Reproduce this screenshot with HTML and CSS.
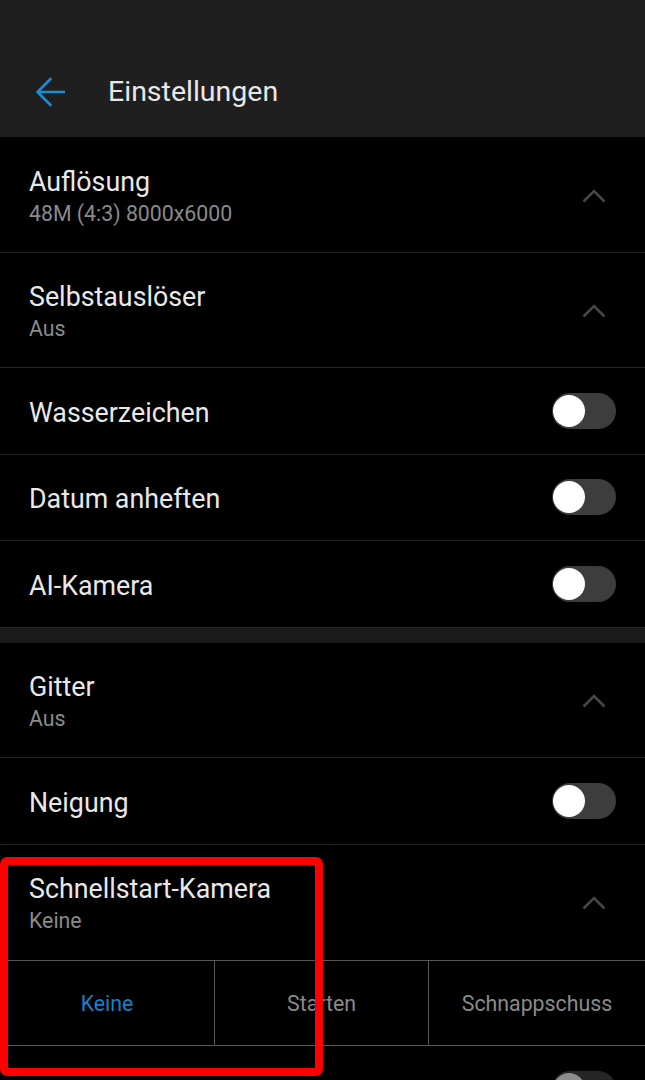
FILE: index.html
```html
<!DOCTYPE html>
<html lang="de">
<head>
<meta charset="utf-8">
<title>Einstellungen</title>
<link rel="stylesheet" href="styles.css">
</head>
<body>
<div class="screen">
  <header class="appbar">
    <svg class="back" width="30" height="30" viewBox="0 0 30 30" aria-hidden="true">
      <path d="M29 15 H2.5 M15.5 2 L2.5 15 L15.5 28" fill="none" stroke="#1e8ad3" stroke-width="2.6" stroke-linecap="round" stroke-linejoin="round"/>
    </svg>
    <h1 class="appbar-title">Einstellungen</h1>
  </header>

  <div class="group">
    <div class="row row-tall row-first">
      <div class="texts"><div class="title">Auflösung</div><div class="sub">48M (4:3) 8000x6000</div></div>
      <svg class="chev" width="24" height="14" viewBox="0 0 24 14"><path d="M1.5 12.5 L12 2 L22.5 12.5" fill="none" stroke="#474747" stroke-width="2.6"/></svg>
    </div>
    <div class="row row-tall">
      <div class="texts"><div class="title">Selbstauslöser</div><div class="sub">Aus</div></div>
      <svg class="chev" width="24" height="14" viewBox="0 0 24 14"><path d="M1.5 12.5 L12 2 L22.5 12.5" fill="none" stroke="#474747" stroke-width="2.6"/></svg>
    </div>
    <div class="row row-mid">
      <div class="texts"><div class="title">Wasserzeichen</div></div>
      <span class="toggle"><span class="knob"></span></span>
    </div>
    <div class="row">
      <div class="texts"><div class="title">Datum anheften</div></div>
      <span class="toggle"><span class="knob"></span></span>
    </div>
    <div class="row row-last">
      <div class="texts"><div class="title">AI-Kamera</div></div>
      <span class="toggle"><span class="knob"></span></span>
    </div>
  </div>

  <div class="band"></div>

  <div class="group">
    <div class="row row-tall">
      <div class="texts"><div class="title">Gitter</div><div class="sub">Aus</div></div>
      <svg class="chev" width="24" height="14" viewBox="0 0 24 14"><path d="M1.5 12.5 L12 2 L22.5 12.5" fill="none" stroke="#474747" stroke-width="2.6"/></svg>
    </div>
    <div class="row row-mid">
      <div class="texts"><div class="title">Neigung</div></div>
      <span class="toggle"><span class="knob"></span></span>
    </div>
    <div class="row row-tall row-open">
      <div class="texts"><div class="title">Schnellstart-Kamera</div><div class="sub">Keine</div></div>
      <svg class="chev" width="24" height="14" viewBox="0 0 24 14"><path d="M1.5 12.5 L12 2 L22.5 12.5" fill="none" stroke="#474747" stroke-width="2.6"/></svg>
    </div>
    <div class="options">
      <div class="opt opt-active">Keine</div>
      <div class="opt">Starten</div>
      <div class="opt">Schnappschuss</div>
    </div>
    <div class="row row-mid">
      <div class="texts"><div class="title">&nbsp;</div></div>
      <span class="toggle toggle-dim"><span class="knob"></span></span>
    </div>
  </div>

  <div class="highlight"></div>
</div>
</body>
</html>
```
FILE: styles.css
```css
* { box-sizing: border-box; }
html, body { margin: 0; padding: 0; background: #000; }
body { font-family: Roboto, "Noto Sans", "Liberation Sans", sans-serif; }

.screen {
  position: relative;
  width: 645px;
  height: 1080px;
  overflow: hidden;
  background: #000;
}

.appbar {
  height: 137px;
  background: #1f1f1f;
  display: flex;
  align-items: center;
  padding: 46px 0 0 35px;
}
.back { flex: none; display: block; }
.appbar-title {
  margin: 0 0 0 43px;
  font-size: 28.5px;
  font-weight: 400;
  color: #e8e8e8;
  line-height: 34px;
}

.group { display: flex; flex-direction: column; }

.row {
  height: 86px;
  display: flex;
  align-items: center;
  justify-content: space-between;
  padding: 0 29px;
  border-bottom: 1px solid #242424;
  flex: none;
}
.row .texts { margin-top: 3px; }
.row-mid { height: 87px; }
.row-tall { height: 115px; align-items: flex-start; padding-top: 27px; }
.row-tall .texts { margin-top: 0; }
.row-first { height: 116px; padding-top: 28px; }
.row-tall .chev { margin-top: 24px; margin-right: 10px; }
.row-last { border-bottom: none; }
.row-open { border-bottom: none; }

.title {
  font-size: 26.8px;
  line-height: 34px;
  color: #e8e8e8;
}
.sub {
  font-size: 21.3px;
  line-height: 30px;
  color: #8a8a8a;
}

.chev { display: block; flex: none; }

.toggle {
  position: relative;
  flex: none;
  width: 64px;
  height: 36px;
  border-radius: 18px;
  background: #3d3d3d;
  margin-top: -1px;
}
.knob {
  position: absolute;
  left: 1px;
  top: 2px;
  width: 32px;
  height: 32px;
  border-radius: 50%;
  background: #fff;
}
.toggle-dim { background: #262626; margin-top: 0; }
.toggle-dim .knob { background: #8c8c8c; }

.band {
  height: 16px;
  background: #1a1a1a;
  border-top: 1px solid #262626;
  flex: none;
}

.options {
  display: grid;
  grid-template-columns: 215px 214px 1fr;
  height: 86px;
  border-top: 1px solid #575757;
  border-bottom: 1px solid #575757;
}
.opt {
  display: flex;
  align-items: center;
  justify-content: center;
  font-size: 21.3px;
  font-weight: 400;
  color: #8a8a8a;
  border-right: 1px solid #575757;
}
.opt:last-child { border-right: none; }
.opt-active { color: #1a7fc6; }

.highlight {
  position: absolute;
  left: 0;
  top: 857px;
  width: 323px;
  height: 219px;
  border: 8px solid #ff0000;
  border-radius: 7px;
  pointer-events: none;
}
```
